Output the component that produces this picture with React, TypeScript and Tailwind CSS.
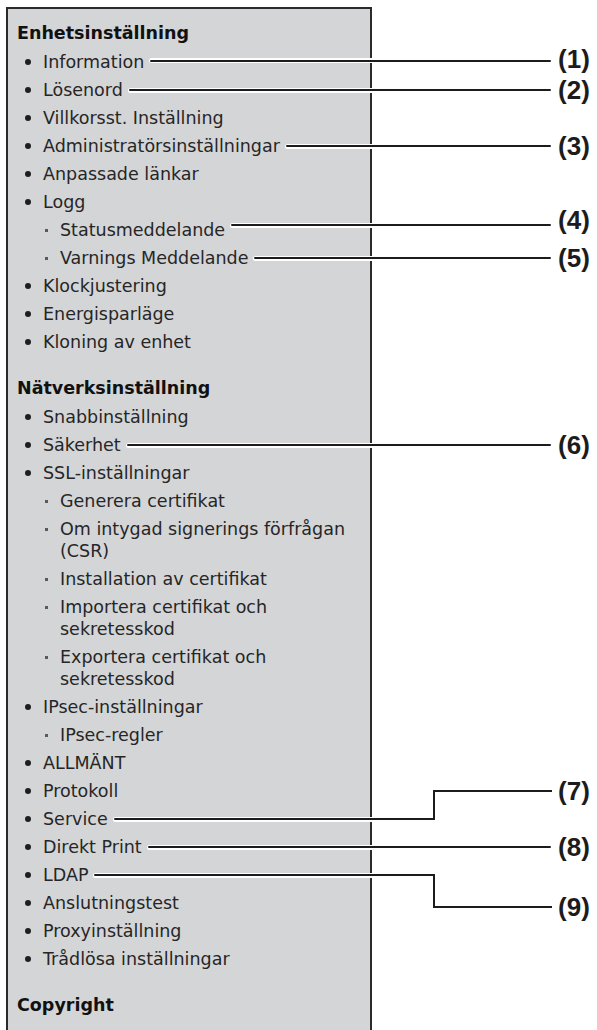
import React from 'react';

type Callout = {
  n: number;
  elbow?: 'up' | 'down';
  shift?: string;
};

type Item = {
  label: React.ReactNode;
  callout?: Callout;
  children?: Item[];
};

type Section = { title: string; items: Item[] };

const sections: Section[] = [
  {
    title: 'Enhetsinställning',
    items: [
      { label: 'Information', callout: { n: 1, shift: '-mt-[3px]' } },
      { label: 'Lösenord', callout: { n: 2 } },
      { label: 'Villkorsst. Inställning' },
      { label: 'Administratörsinställningar', callout: { n: 3 } },
      { label: 'Anpassade länkar' },
      {
        label: 'Logg',
        children: [
          { label: 'Statusmeddelande', callout: { n: 4, shift: '-mt-[10px]' } },
          { label: 'Varnings Meddelande', callout: { n: 5 } },
        ],
      },
      { label: 'Klockjustering' },
      { label: 'Energisparläge' },
      { label: 'Kloning av enhet' },
    ],
  },
  {
    title: 'Nätverksinställning',
    items: [
      { label: 'Snabbinställning' },
      { label: 'Säkerhet', callout: { n: 6 } },
      {
        label: 'SSL-inställningar',
        children: [
          { label: 'Generera certifikat' },
          {
            label: (
              <>
                Om intygad signerings förfrågan
                <br />
                (CSR)
              </>
            ),
          },
          { label: 'Installation av certifikat' },
          {
            label: (
              <>
                Importera certifikat och
                <br />
                sekretesskod
              </>
            ),
          },
          {
            label: (
              <>
                Exportera certifikat och
                <br />
                sekretesskod
              </>
            ),
          },
        ],
      },
      { label: 'IPsec-inställningar', children: [{ label: 'IPsec-regler' }] },
      { label: 'ALLMÄNT' },
      { label: 'Protokoll' },
      { label: 'Service', callout: { n: 7, elbow: 'up' } },
      { label: 'Direkt Print', callout: { n: 8 } },
      { label: 'LDAP', callout: { n: 9, elbow: 'down' } },
      { label: 'Anslutningstest' },
      { label: 'Proxyinställning' },
      { label: 'Trådlösa inställningar' },
    ],
  },
];

const labelClass =
  "absolute left-[calc(100%+188px)] -translate-y-1/2 font-['Liberation_Sans',Arial,sans-serif] text-[26px] font-bold leading-none text-[#1c1c1c] whitespace-nowrap";

const Line: React.FC<{ far: boolean; shift?: string }> = ({ far, shift }) => (
  <span
    className={`ml-[5px] flex h-[5px] min-w-0 flex-1 items-center rounded-full bg-white px-[1px] ${
      far ? '-mr-[182px]' : '-mr-[65px]'
    } ${shift ?? ''}`}
  >
    <span className="h-[2px] w-full rounded-full bg-[#1c1c1c]" />
  </span>
);

const CalloutMark: React.FC<{ c: Callout }> = ({ c }) => {
  if (c.elbow === 'up') {
    return (
      <>
        <Line far={false} />
        <span className="absolute bottom-[10px] left-[calc(100%+63px)] h-[30px] w-[119px] border-l-2 border-t-2 border-[#1c1c1c]" />
        <span className={`${labelClass} top-[-17px]`}>({c.n})</span>
      </>
    );
  }
  if (c.elbow === 'down') {
    return (
      <>
        <Line far={false} />
        <span className="absolute top-[10px] left-[calc(100%+63px)] h-[34px] w-[119px] border-b-2 border-l-2 border-[#1c1c1c]" />
        <span className={`${labelClass} top-[43px]`}>({c.n})</span>
      </>
    );
  }
  return (
    <>
      <Line far={true} shift={c.shift} />
      <span className={`${labelClass} top-1/2 ${c.shift ?? ''}`}>({c.n})</span>
    </>
  );
};

const Row: React.FC<{ item: Item; sub?: boolean }> = ({ item, sub }) => (
  <li className="flex items-start">
    {sub ? (
      <span className="flex w-[17px] shrink-0 pt-[10px]">
        <span className="ml-[2px] h-[3px] w-[3px] bg-[#5a5a5a]" />
      </span>
    ) : (
      <span className="flex w-[26px] shrink-0 pt-[8px]">
        <span className="ml-[8px] h-[6px] w-[6px] rounded-full bg-[#1e1e1e]" />
      </span>
    )}
    <div className="min-w-0 flex-1">
      <div className="relative flex min-h-[22px] items-center">
        <span className="shrink-0 whitespace-nowrap text-[17.5px] leading-[22px] text-[#262626]">
          {item.label}
        </span>
        {item.callout && <CalloutMark c={item.callout} />}
      </div>
      {item.children && (
        <ul className="mt-[6px] flex flex-col gap-[6px]">
          {item.children.map((child, i) => (
            <Row key={i} item={child} sub />
          ))}
        </ul>
      )}
    </div>
  </li>
);

export default function App() {
  return (
    <div className="min-h-[1030px] bg-white pt-[7px] pl-[6px]">
      <div className="w-[366px] border-2 border-b-0 border-[#2b2b2b] bg-[#d4d5d7] pt-[13px] pb-[40px] pl-[9px] font-['DejaVu_Sans',Verdana,sans-serif]">
        {sections.map((s, si) => (
          <div key={s.title} className={si > 0 ? 'mt-[24px]' : ''}>
            <h2 className="text-[17.5px] font-bold leading-[22px] text-[#111]">{s.title}</h2>
            <ul className="mt-[7px] flex flex-col gap-[6px]">
              {s.items.map((item, i) => (
                <Row key={i} item={item} />
              ))}
            </ul>
          </div>
        ))}
        <h2 className="mt-[24px] text-[17.5px] font-bold leading-[22px] text-[#111]">Copyright</h2>
      </div>
    </div>
  );
}
